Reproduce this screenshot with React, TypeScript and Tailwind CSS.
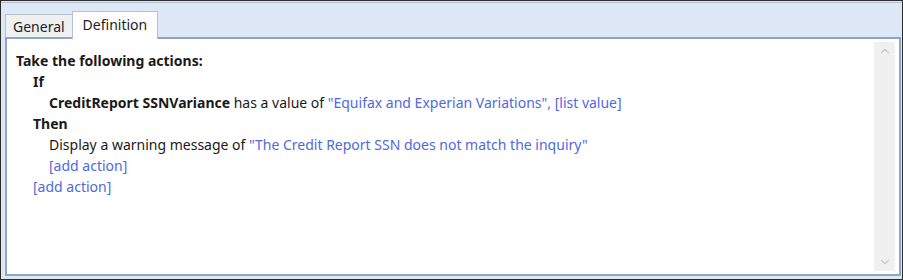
import { ChevronUp, ChevronDown } from 'lucide-react';

const link = 'text-[#5068e0]';

export default function App() {
  return (
    <div
      className="w-[903px] h-[280px] border border-[#2b2b2b] bg-[#dde7f5] flex flex-col text-[14px] text-[#1a1a1a]"
      style={{ fontFamily: '"Noto Sans", "Open Sans", sans-serif' }}
    >
      <div className="border-t border-[#b4c2d6] mt-[1px]" />
      {/* Tabs */}
      <div className="flex items-end pl-[4px] pt-[8px] relative z-10">
        <div className="h-[23px] px-[7px] flex items-center border border-b-0 border-[#b9c3cf] bg-[#eef0f2] text-[#222]">
          General
        </div>
        <div className="h-[28px] px-[10px] -ml-[1px] flex items-center border border-b-0 border-[#b9c3cf] bg-white text-[#222] -mb-[2px] pb-[3px]">
          Definition
        </div>
      </div>
      {/* Panel */}
      <div className="flex-1 ml-[4px] mr-[1px] mb-[3px] border-2 border-[#8ea6c6] bg-white flex">
        <div className="flex-1 pl-[9px] pt-[11px] leading-[21px]">
          <div className="font-bold">Take the following actions:</div>
          <div className="pl-[17px]">
            <div className="font-bold">If</div>
            <div className="pl-[16px]">
              <span className="font-bold">CreditReport SSNVariance</span> has a value of{' '}
              <span className={link}>"Equifax and Experian Variations", [list value]</span>
            </div>
            <div className="font-bold">Then</div>
            <div className="pl-[16px]">
              Display a warning message of{' '}
              <span className={link}>"The Credit Report SSN does not match the inquiry"</span>
            </div>
            <div className={`pl-[16px] ${link}`}>[add action]</div>
            <div className={link}>[add action]</div>
          </div>
        </div>
        {/* Scrollbar */}
        <div className="w-[21px] my-[3px] mr-[4px] bg-[#f0f0f0] flex flex-col justify-between items-center py-[2px]">
          <ChevronUp className="w-[14px] h-[14px] text-[#c8c8c8]" strokeWidth={2} />
          <ChevronDown className="w-[14px] h-[14px] text-[#c8c8c8]" strokeWidth={2} />
        </div>
      </div>
    </div>
  );
}
